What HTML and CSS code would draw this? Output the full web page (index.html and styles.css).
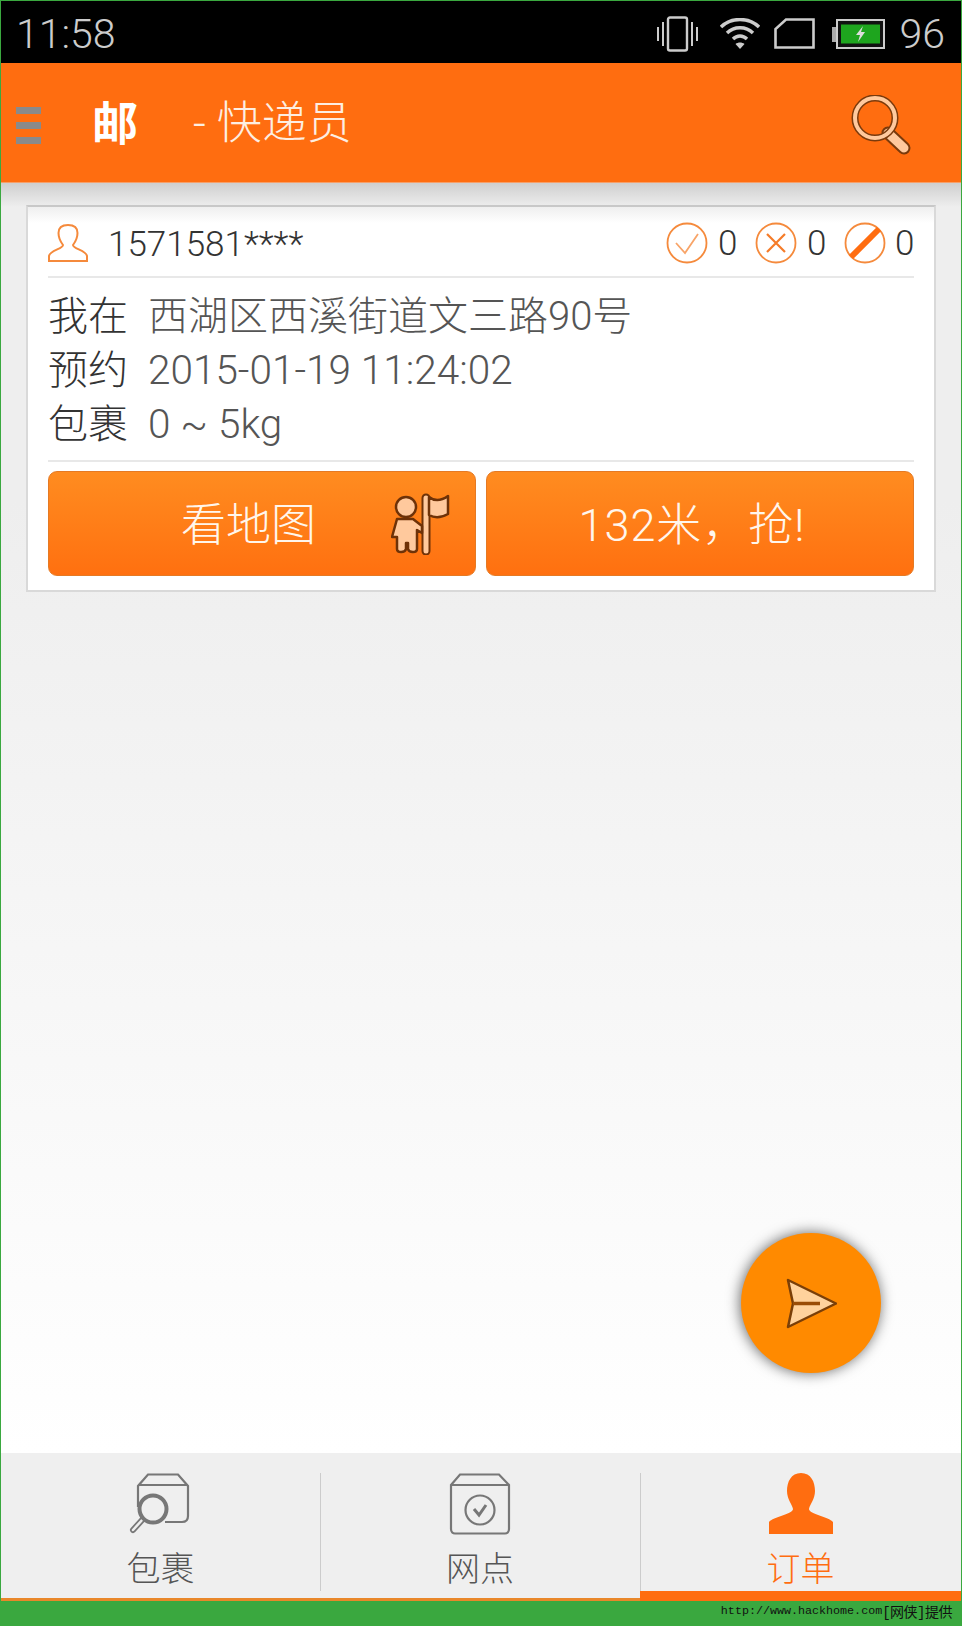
FILE: index.html
```html
<!DOCTYPE html>
<html>
<head>
    <meta charset="utf-8">
    <title>邮 - 快递员</title>
    <link rel="stylesheet" href="styles.css">
</head>
<body>
<div class="app">
    <div class="status-bar">
        <span class="status-time">11:58</span>
        <div class="status-icons">
            <svg class="icon-vibrate" width="41" height="36" viewBox="0 0 41 36">
                <rect x="11" y="1.500" width="19" height="33" rx="2" fill="none" stroke="#ccc" stroke-width="2.400"/>
                <path d="M6 6v24M1 11v14M35 6v24M40 11v14" stroke="#ccc" stroke-width="2" fill="none"/>
            </svg>
            <svg class="icon-wifi" width="40" height="32" viewBox="0 0 40 32">
                <path d="M1 9C11 -1 29 -1 39 9" stroke="#ccc" stroke-width="3.400" fill="none"/>
                <path d="M7 15C14 8 26 8 33 15" stroke="#ccc" stroke-width="3.400" fill="none"/>
                <path d="M13 21C17 17 23 17 27 21" stroke="#ccc" stroke-width="3.400" fill="none"/>
                <path d="M15.500 26L20 31L24.500 26C22 24 18 24 15.500 26Z" fill="#ccc"/>
            </svg>
            <svg class="icon-sim" width="41" height="31" viewBox="0 0 41 31">
                <path d="M1.500 29.500V11L12 1.500H39.500V29.500Z" fill="none" stroke="#ccc" stroke-width="2.600"/>
            </svg>
            <svg class="icon-battery" width="53" height="30" viewBox="0 0 53 30">
                <rect x="0" y="8" width="5" height="15" fill="#aaa"/>
                <rect x="5" y="1" width="47" height="28" fill="#111" stroke="#ccc" stroke-width="2"/>
                <rect x="9" y="5.500" width="39" height="19" fill="#1ea51e"/>
                <path d="M31 7L24 16H28L26 23L33 13H29Z" fill="#ddd"/>
            </svg>
            <span class="status-level">96</span>
        </div>
    </div>

    <div class="app-bar">
        <div class="menu-icon"><i></i><i></i><i></i></div>
        <span class="app-logo">邮</span>
        <span class="app-title">- 快递员</span>
        <svg class="search-icon" width="60" height="62" viewBox="0 0 60 62">
            <path d="M37 38L53 53" stroke="#7a3a0c" stroke-width="13" stroke-linecap="round"/>
            <path d="M37 38L53 53" stroke="#ffc99d" stroke-width="9" stroke-linecap="round"/>
            <circle cx="24" cy="23" r="20" fill="none" stroke="#7a3a0c" stroke-width="7"/>
            <circle cx="24" cy="23" r="20" fill="none" stroke="#ffc99d" stroke-width="4"/>
        </svg>
    </div>

    <div class="content">
        <div class="order-card">
            <div class="order-head">
                <svg class="user-icon" width="40" height="38" viewBox="0 0 40 38">
                    <path d="M15 21C12 17 10.500 13 10.500 9C10.500 4 14 1 20 1C26 1 29.500 4 29.500 9C29.500 13 28 17 25 21C25 25 38 26 39 32V37H1V32C2 26 15 25 15 21Z" fill="none" stroke="#f58a3c" stroke-width="2"/>
                </svg>
                <span class="order-phone">1571581****</span>
                <div class="order-counts">
                    <svg width="42" height="42" viewBox="0 0 42 42">
                        <circle cx="21" cy="21" r="19.500" fill="none" stroke="#f58a3c" stroke-width="1.800"/>
                        <path d="M10 21L19 31L32 12" fill="none" stroke="#f8a468" stroke-width="1.800"/>
                    </svg>
                    <span class="count">0</span>
                    <svg width="42" height="42" viewBox="0 0 42 42">
                        <circle cx="21" cy="21" r="19.500" fill="none" stroke="#f58a3c" stroke-width="1.800"/>
                        <path d="M12 12L30 30M30 12L12 30" stroke="#f57b28" stroke-width="2.200"/>
                    </svg>
                    <span class="count">0</span>
                    <svg width="42" height="42" viewBox="0 0 42 42">
                        <circle cx="21" cy="21" r="19.500" fill="none" stroke="#f58a3c" stroke-width="1.800"/>
                        <path d="M7 35L35 7" stroke="#ff6d10" stroke-width="6"/>
                    </svg>
                    <span class="count">0</span>
                </div>
            </div>
            <div class="order-info">
                <div class="info-row"><span class="info-label">我在</span><span class="info-value">西湖区西溪街道文三路90号</span></div>
                <div class="info-row"><span class="info-label">预约</span><span class="info-value info-number">2015-01-19 11:24:02</span></div>
                <div class="info-row"><span class="info-label">包裹</span><span class="info-value info-number">0 ~ 5kg</span></div>
            </div>
            <div class="order-actions">
                <button class="btn btn-map">
                    <span>看地图</span>
                    <svg width="60" height="62" viewBox="0 0 60 62">
                        <path d="M35 5V58" stroke="#6e3208" stroke-width="9" stroke-linecap="round"/>
                        <path d="M35 5V58" stroke="#ffc99d" stroke-width="5" stroke-linecap="round"/>
                        <path d="M38 4C43 8 50 8 57 3V21C50 25 43 25 38 22Z" fill="#ffc99d" stroke="#6e3208" stroke-width="2.500" stroke-linejoin="round"/>
                        <path d="M6 26H22L31 33V40L26 37V56C26 60 18 60 17 56V50H15V56C14 60 6 60 6 56V44H1L6 26Z" fill="#ffc99d" stroke="#6e3208" stroke-width="2.500" stroke-linejoin="round"/>
                        <circle cx="15" cy="14" r="10" fill="#ffc99d" stroke="#6e3208" stroke-width="2.500"/>
                    </svg>
                </button>
                <button class="btn btn-grab">132米，抢!</button>
            </div>
        </div>
        <div class="fab">
            <svg width="52" height="52" viewBox="0 0 52 52">
                <path d="M3 3L51 26.500L3 50L8 26.500Z" fill="#ffd29c" stroke="#7a3f08" stroke-width="2.500" stroke-linejoin="round"/>
                <path d="M8 26.500H35" stroke="#9a4d06" stroke-width="3.500"/>
            </svg>
        </div>
    </div>

    <div class="tab-bar">
        <div class="tab">
            <svg width="64" height="62" viewBox="0 0 64 62">
                <path d="M9 34V13L19 1.500H49L59 13V43C59 47 57 49 53 49H36M9 12H59" fill="none" stroke="#777" stroke-width="2.200"/>
                <path d="M14 46L4 57" stroke="#777" stroke-width="6" stroke-linecap="round"/>
                <path d="M14 46L4 57" stroke="#eee" stroke-width="2.500" stroke-linecap="round"/>
                <circle cx="24" cy="36" r="13.500" fill="#efefef" stroke="#777" stroke-width="4"/>
            </svg>
            <span class="tab-label">包裹</span>
        </div>
        <div class="tab">
            <svg width="62" height="62" viewBox="0 0 62 62">
                <path d="M2 12L11 1.500H50L60 12V56C60 59 58 60.500 56 60.500H6C4 60.500 2 59 2 56ZM2 12H60" fill="none" stroke="#777" stroke-width="2.200"/>
                <circle cx="31" cy="37" r="14.500" fill="none" stroke="#777" stroke-width="2.200"/>
                <path d="M25 36L30 42L37 32" fill="none" stroke="#777" stroke-width="3"/>
            </svg>
            <span class="tab-label">网点</span>
        </div>
        <div class="tab tab-active">
            <svg width="64" height="62" viewBox="0 0 64 62">
                <path d="M32 0C42 0 46 9 46 18C46 26 41 31 40 36C40 41 60 44 64 49V61H0V49C4 44 24 41 24 36C23 31 18 26 18 18C18 9 22 0 32 0Z" fill="#ff6d10"/>
            </svg>
            <span class="tab-label">订单</span>
        </div>
    </div>

    <div class="watermark">http://www.hackhome.com<span class="watermark-cn">[网侠]提供</span></div>
</div>
</body>
</html>
```

FILE: styles.css
```css
body {
    margin: 0;
    font-family: Roboto, "Noto Sans CJK SC", sans-serif;
    font-weight: 300;
}

.app {
    display: flex;
    flex-direction: column;
    height: 1626px;
    box-sizing: border-box;
    border: 1px solid #3aa83f;
    border-bottom: none;
    background-color: #3aa83f;
}

.status-bar {
    display: flex;
    align-items: center;
    justify-content: space-between;
    height: 62px;
    flex: none;
    padding: 3px 16px 0 15px;
    box-sizing: border-box;
    background-color: #000;
    color: #ccc;
}

.status-time,
.status-level {
    font-size: 41px;
    line-height: 58px;
}

.status-icons {
    display: flex;
    align-items: center;
}

.icon-vibrate {
    margin-right: 22px;
}

.icon-wifi {
    margin-right: 14px;
}

.icon-sim {
    margin-right: 17px;
}

.icon-battery {
    margin-right: 15px;
}

.app-bar {
    display: flex;
    align-items: center;
    height: 120px;
    flex: none;
    box-sizing: border-box;
    padding-left: 15px;
    background-color: #ff6d10;
    border-bottom: 1px solid #f6a06a;
    color: #fff;
}

.menu-icon {
    display: flex;
    flex-direction: column;
    gap: 8px;
    width: 25px;
    margin-top: 6px;
}

.menu-icon i {
    display: block;
    height: 7px;
    background-color: #8a8a8a;
}

.app-logo {
    margin-left: 51px;
    margin-top: 2px;
    font-size: 46px;
    font-weight: 700;
    line-height: 1;
}

.app-title {
    margin-left: 55px;
    margin-top: 2px;
    font-size: 45px;
    line-height: 1;
    color: #fdeee2;
}

.search-icon {
    margin-left: auto;
    margin-right: 50px;
    margin-top: 6px;
}

.content {
    position: relative;
    flex: 1;
    padding: 22px 25px 0;
    background:
        linear-gradient(to bottom, #cfcfcf, rgba(238, 238, 238, 0) 24px),
        linear-gradient(to bottom, #eeeeee 25%, #ffffff);
}

.order-card {
    height: 387px;
    box-sizing: border-box;
    padding: 0 20px;
    background: linear-gradient(to bottom, #efefef, #ffffff 16px);
    border: 2px solid #d9d9d9;
    border-top-color: #c8c8c8;
}

.order-head {
    display: flex;
    align-items: center;
    height: 69px;
    border-bottom: 2px solid #e8e8e8;
    color: #333;
}

.user-icon {
    margin-top: 3px;
}

.order-phone {
    margin-left: 20px;
    margin-top: 5px;
    font-size: 35px;
}

.order-counts {
    display: flex;
    align-items: center;
    margin-left: auto;
    margin-top: 2px;
}

.count {
    width: 47px;
    padding-left: 10px;
    padding-top: 2px;
    box-sizing: border-box;
    font-size: 35px;
}

.count:last-child {
    width: 28px;
    padding-left: 9px;
}

.order-info {
    height: 184px;
    padding-top: 6px;
    box-sizing: border-box;
    border-bottom: 2px solid #e8e8e8;
}

.info-row {
    display: flex;
    align-items: baseline;
    height: 54px;
}

.info-label {
    width: 100px;
    flex: none;
    font-size: 40px;
    color: #333;
}

.info-value {
    font-size: 40px;
    color: #555;
}

.info-number {
    font-size: 40.500px;
}

.order-actions {
    display: grid;
    grid-template-columns: 1fr 1fr;
    gap: 10px;
    margin-top: 9px;
}

.btn {
    display: flex;
    align-items: center;
    height: 105px;
    padding: 0 0 4px;
    box-sizing: border-box;
    font-family: inherit;
    font-weight: 300;
    font-size: 45px;
    color: #fff6ec;
    border: 1px solid #e57a24;
    border-radius: 9px;
    background: linear-gradient(to bottom, #ff8c20, #ff7010);
}

.btn-map {
    padding-left: 132px;
}

.btn-map svg {
    margin-left: 75px;
    margin-top: 4px;
}

.btn-grab {
    justify-content: center;
    padding-right: 16px;
    letter-spacing: 1px;
}

.fab {
    position: absolute;
    right: 80px;
    bottom: 80px;
    display: flex;
    align-items: center;
    justify-content: center;
    width: 140px;
    height: 140px;
    border-radius: 50%;
    background-color: #ff8a00;
    box-shadow: -1px 0 14px #666;
}

.tab-bar {
    display: flex;
    height: 148px;
    flex: none;
    background-color: #efefef;
    border-bottom: 3px solid #e9872a;
    box-sizing: border-box;
}

.tab {
    position: relative;
    display: flex;
    flex-direction: column;
    align-items: center;
    flex: 0 0 320px;
    box-sizing: border-box;
    padding-top: 20px;
    color: #555;
}

.tab:first-child {
    flex-basis: 319px;
}

.tab + .tab::before {
    content: "";
    position: absolute;
    left: 0;
    top: 20px;
    height: 118px;
    width: 1px;
    background-color: #ccc;
}

.tab-label {
    margin-top: 14px;
    font-size: 34px;
    line-height: 40px;
}

.tab-active {
    flex: 1;
    color: #ff6d10;
    box-shadow: inset 0 -10px 0 #ff6d10;
    margin-bottom: -3px;
}

.watermark {
    display: flex;
    justify-content: flex-end;
    align-items: center;
    height: 25px;
    flex: none;
    padding-right: 9px;
    padding-bottom: 5px;
    box-sizing: border-box;
    font-family: "Liberation Mono", "Noto Sans CJK SC", monospace;
    font-weight: 400;
    font-size: 11.700px;
    color: #111;
}

.watermark-cn {
    font-size: 14px;
    letter-spacing: -0.500px;
}
```
